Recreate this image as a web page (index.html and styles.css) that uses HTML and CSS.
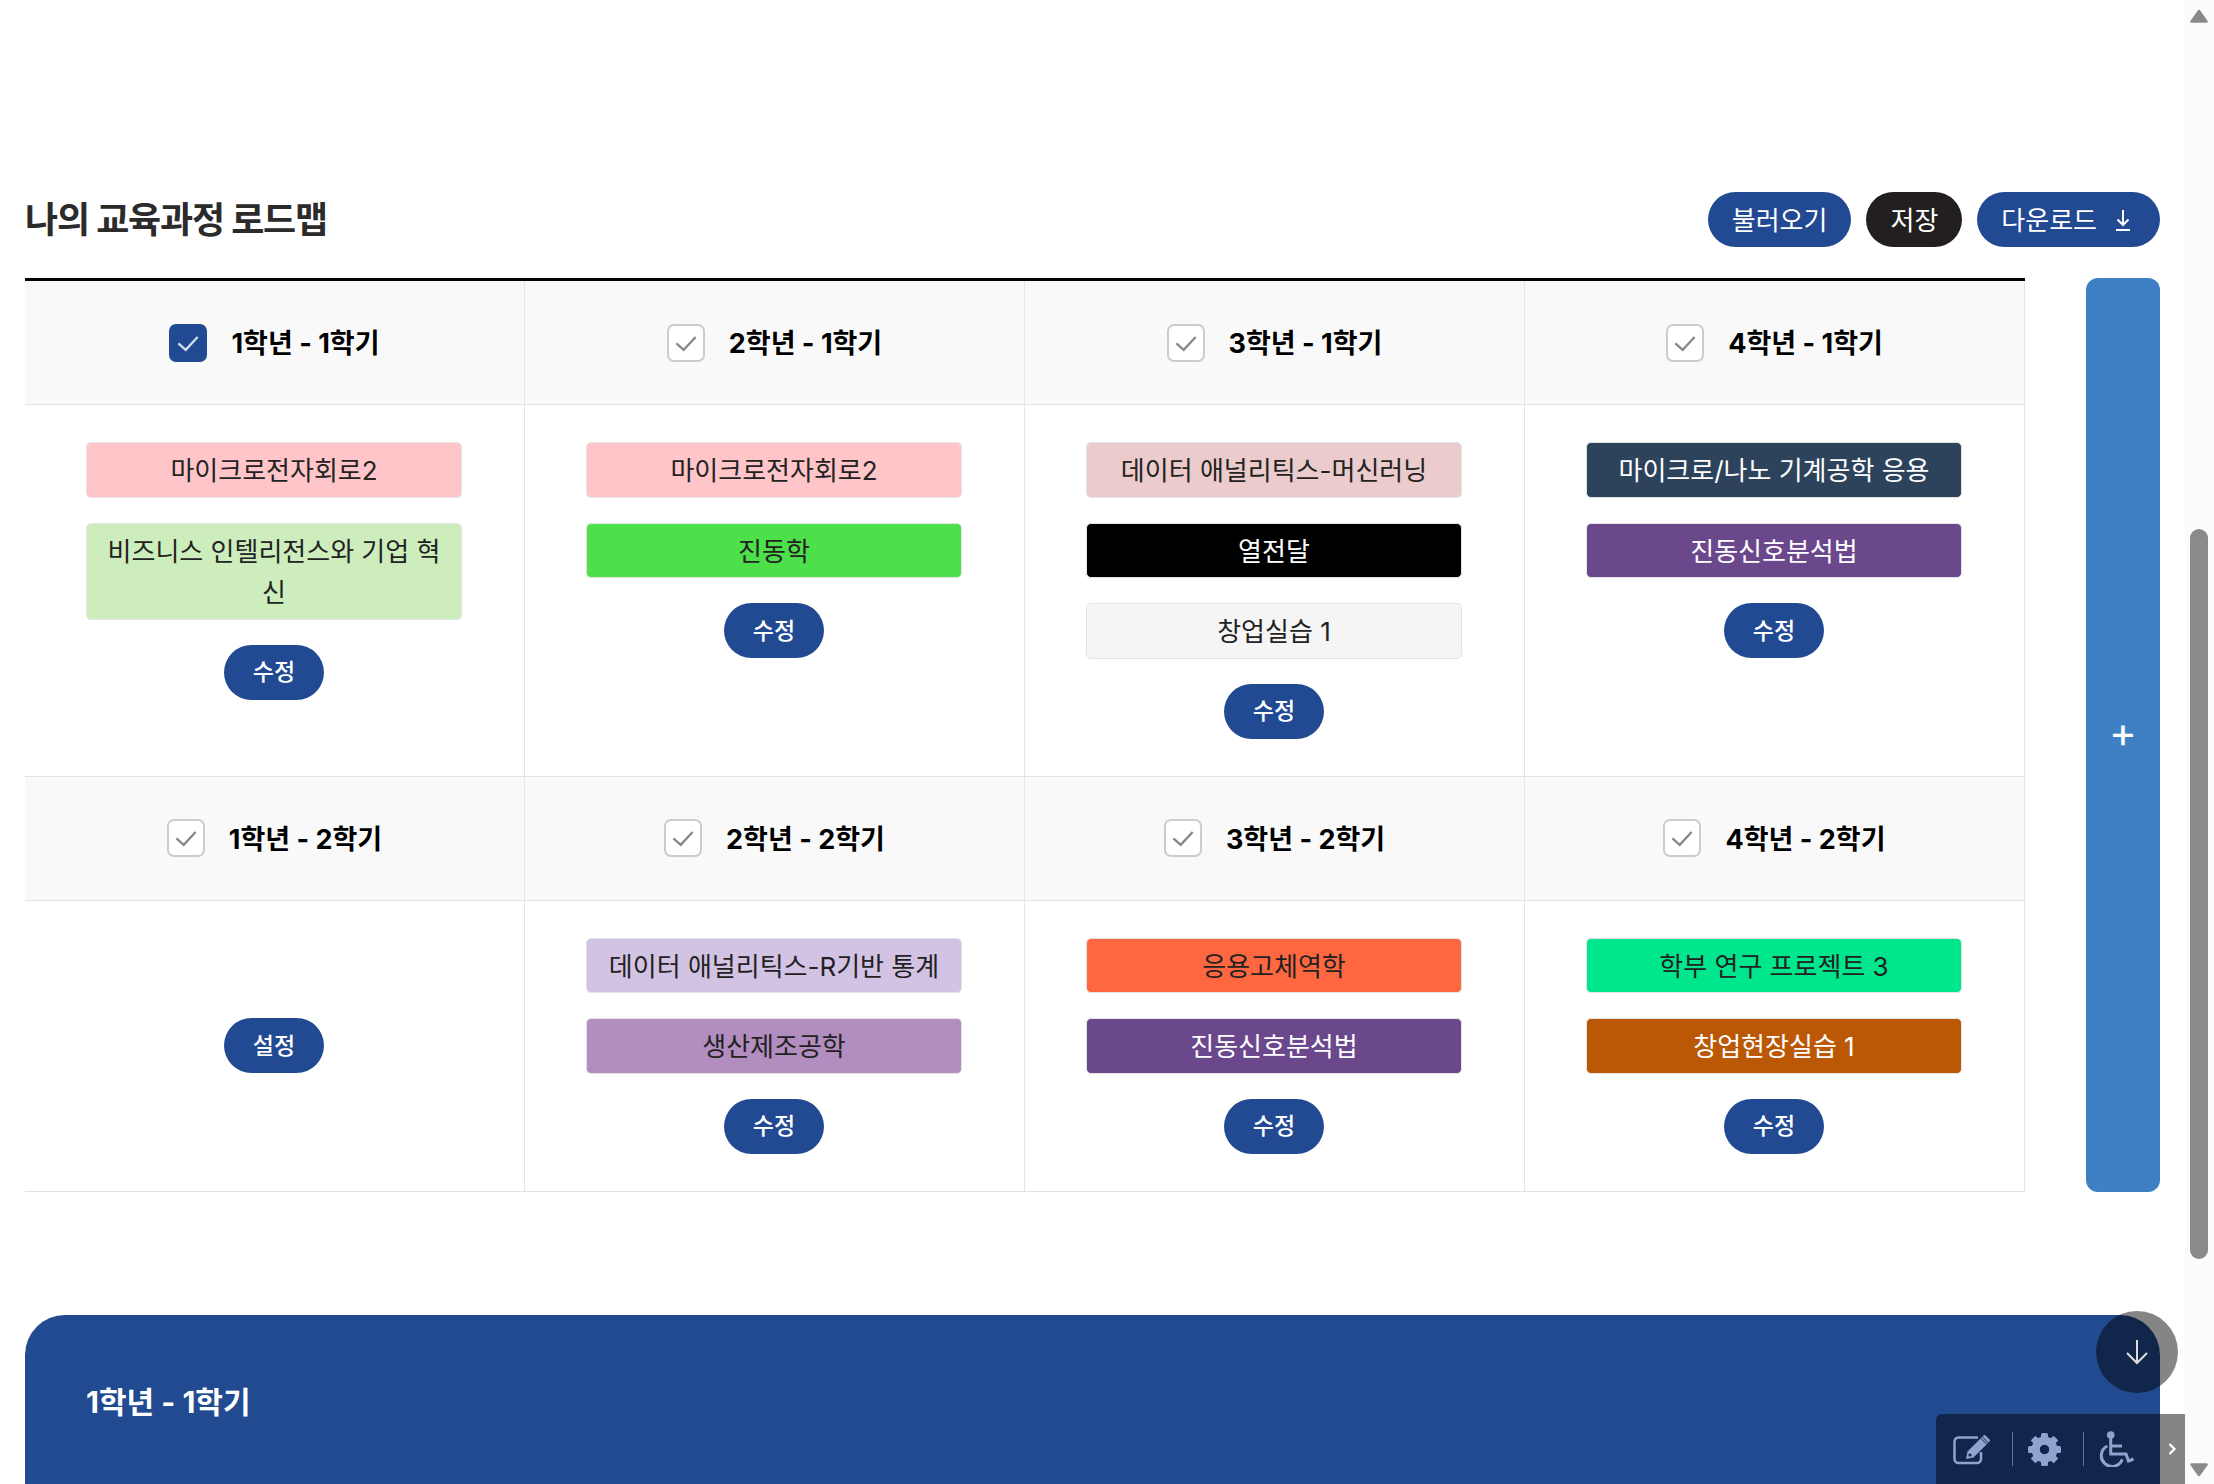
FILE: index.html
```html
<!DOCTYPE html>
<html lang="ko">
<head>
    <meta charset="UTF-8">
    <meta name="viewport" content="width=device-width, initial-scale=1.0">
    <title>나의 교육과정 로드맵</title>
    <link rel="stylesheet" href="styles.css">
</head>
<body>
    <div class="page">
        <div class="roadmap-head">
            <h2 class="roadmap-title">나의 교육과정 로드맵</h2>
            <div class="head-buttons">
                <button class="pill-button">불러오기</button>
                <button class="pill-button pill-dark">저장</button>
                <button class="pill-button pill-icon">다운로드
                    <svg class="download-icon" viewBox="0 0 16 22" fill="none" stroke="currentColor" stroke-width="2"><path d="M8 1v14M2.500 10.500 8 16l5.500-5.500M1 21h14"/></svg>
                </button>
            </div>
        </div>

        <div class="roadmap">
            <div class="semester-grid">
                <div class="semester-head">
                    <span class="check is-checked"><svg viewBox="0 0 37 37" fill="none" stroke="currentColor" stroke-width="2.500"><path d="M8 19l8 7 13-14"/></svg></span>
                    <span class="semester-name">1학년 - 1학기</span>
                </div>
                <div class="semester-head">
                    <span class="check"><svg viewBox="0 0 37 37" fill="none" stroke="currentColor" stroke-width="2.500"><path d="M8 19l8 7 13-14"/></svg></span>
                    <span class="semester-name">2학년 - 1학기</span>
                </div>
                <div class="semester-head">
                    <span class="check"><svg viewBox="0 0 37 37" fill="none" stroke="currentColor" stroke-width="2.500"><path d="M8 19l8 7 13-14"/></svg></span>
                    <span class="semester-name">3학년 - 1학기</span>
                </div>
                <div class="semester-head">
                    <span class="check"><svg viewBox="0 0 37 37" fill="none" stroke="currentColor" stroke-width="2.500"><path d="M8 19l8 7 13-14"/></svg></span>
                    <span class="semester-name">4학년 - 1학기</span>
                </div>

                <div class="semester-body">
                    <div class="course c-pink">마이크로전자회로2</div>
                    <div class="course c-mint">비즈니스 인텔리전스와 기업 혁신</div>
                    <button class="edit-button">수정</button>
                </div>
                <div class="semester-body">
                    <div class="course c-pink">마이크로전자회로2</div>
                    <div class="course c-green">진동학</div>
                    <button class="edit-button">수정</button>
                </div>
                <div class="semester-body">
                    <div class="course c-rose">데이터 애널리틱스-머신러닝</div>
                    <div class="course c-black">열전달</div>
                    <div class="course c-grey">창업실습 1</div>
                    <button class="edit-button">수정</button>
                </div>
                <div class="semester-body">
                    <div class="course c-navy">마이크로/나노 기계공학 응용</div>
                    <div class="course c-purple">진동신호분석법</div>
                    <button class="edit-button">수정</button>
                </div>

                <div class="semester-head">
                    <span class="check"><svg viewBox="0 0 37 37" fill="none" stroke="currentColor" stroke-width="2.500"><path d="M8 19l8 7 13-14"/></svg></span>
                    <span class="semester-name">1학년 - 2학기</span>
                </div>
                <div class="semester-head">
                    <span class="check"><svg viewBox="0 0 37 37" fill="none" stroke="currentColor" stroke-width="2.500"><path d="M8 19l8 7 13-14"/></svg></span>
                    <span class="semester-name">2학년 - 2학기</span>
                </div>
                <div class="semester-head">
                    <span class="check"><svg viewBox="0 0 37 37" fill="none" stroke="currentColor" stroke-width="2.500"><path d="M8 19l8 7 13-14"/></svg></span>
                    <span class="semester-name">3학년 - 2학기</span>
                </div>
                <div class="semester-head">
                    <span class="check"><svg viewBox="0 0 37 37" fill="none" stroke="currentColor" stroke-width="2.500"><path d="M8 19l8 7 13-14"/></svg></span>
                    <span class="semester-name">4학년 - 2학기</span>
                </div>

                <div class="semester-body is-empty">
                    <button class="edit-button">설정</button>
                </div>
                <div class="semester-body">
                    <div class="course c-lavender">데이터 애널리틱스-R기반 통계</div>
                    <div class="course c-orchid">생산제조공학</div>
                    <button class="edit-button">수정</button>
                </div>
                <div class="semester-body">
                    <div class="course c-coral">응용고체역학</div>
                    <div class="course c-purple">진동신호분석법</div>
                    <button class="edit-button">수정</button>
                </div>
                <div class="semester-body">
                    <div class="course c-spring">학부 연구 프로젝트 3</div>
                    <div class="course c-rust">창업현장실습 1</div>
                    <button class="edit-button">수정</button>
                </div>
            </div>
            <button class="add-panel">+</button>
        </div>

        <section class="detail">
            <h3 class="detail-title">1학년 - 1학기</h3>
        </section>
    </div>

    <!-- floating things over the page -->
    <button class="to-bottom">
        <svg viewBox="0 0 24 26" fill="none" stroke="currentColor" stroke-width="2"><path d="M12 1v23M2 14l10 10 10-10"/></svg>
    </button>
    <div class="toolbar">
        <svg class="tool-icon tool-edit" viewBox="0 0 39 31" fill="none" stroke="currentColor" stroke-width="2.500">
            <path d="M26 3.500H6.500a4 4 0 0 0-4 4V25a4 4 0 0 0 4 4H25a4 4 0 0 0 4-4v-7"/>
            <path d="M14 25l1.500-7.500L30 3l6 6-14.500 14.500z" fill="currentColor" stroke="none"/>
            <path d="M31.500 1.500a1.500 1.500 0 0 1 2 0l4 4a1.500 1.500 0 0 1 0 2l-1 1-6-6z" fill="currentColor" stroke="none"/>
            <path d="M29 4.500l5.500 5.500" stroke="#12254d" stroke-width="1"/>
            <circle cx="18" cy="21" r="1.600" fill="#12254d" stroke="none"/>
        </svg>
        <span class="tool-line"></span>
        <svg class="tool-icon tool-gear" viewBox="0 0 33 33" fill="currentColor">
            <circle cx="16.500" cy="16.500" r="9" fill="none" stroke="currentColor" stroke-width="8"/>
            <rect class="tooth" x="13" y="0" width="7" height="33" rx="1.500" mask="url(#gear-hole)"/>
            <rect x="13" y="0" width="7" height="33" rx="1.500" mask="url(#gear-hole)" transform="rotate(45 16.500 16.500)"/>
            <rect x="13" y="0" width="7" height="33" rx="1.500" mask="url(#gear-hole)" transform="rotate(90 16.500 16.500)"/>
            <rect x="13" y="0" width="7" height="33" rx="1.500" mask="url(#gear-hole)" transform="rotate(135 16.500 16.500)"/>
            <mask id="gear-hole" maskUnits="userSpaceOnUse" x="0" y="0" width="33" height="33">
                <rect width="33" height="33" fill="#fff"/>
                <circle cx="16.500" cy="16.500" r="5" fill="#000"/>
            </mask>
        </svg>
        <span class="tool-line tool-line-wide"></span>
        <svg class="tool-icon tool-access" viewBox="0 0 35 36" fill="none" stroke="currentColor" stroke-width="3">
            <circle cx="11.700" cy="4" r="3.800" fill="currentColor" stroke="none"/>
            <path d="M11.700 7v16H27l2.500 7 5-2"/>
            <path d="M11.700 15H23"/>
            <path d="M8.300 15a10.800 10.800 0 1 0 15 13.300"/>
        </svg>
        <span class="tool-arrow">
            <svg viewBox="0 0 8 12" fill="none" stroke="currentColor" stroke-width="2.200"><path d="M1.500 1l5 5-5 5"/></svg>
        </span>
    </div>

    <div class="scrollbar">
        <svg class="scroll-up" viewBox="0 0 18 14"><path d="M9 2 16.500 12.500H1.500z" fill="#8a8a8a" stroke="#8a8a8a" stroke-width="2.500" stroke-linejoin="round"/></svg>
        <span class="scroll-thumb"></span>
        <svg class="scroll-down" viewBox="0 0 18 14"><path d="M9 12 16.500 1.500H1.500z" fill="#8a8a8a" stroke="#8a8a8a" stroke-width="2.500" stroke-linejoin="round"/></svg>
    </div>
</body>
</html>
```

FILE: styles.css
```css
* {
    box-sizing: border-box;
}
html, body {
    height: 100%;
    overflow: hidden;
}
body {
    margin: 0;
    background-color: #fff;
    color: #222;
    font-family: Inter, "Noto Sans CJK KR", sans-serif;
}
button {
    font-family: inherit;
    border: none;
    cursor: pointer;
}
.page {
    width: 2185px;
    padding: 192px 25px 0;
}
.roadmap-head {
    display: flex;
    justify-content: space-between;
    align-items: center;
    height: 55px;
    margin-bottom: 31px;
}
.roadmap-title {
    margin: 0 0 5px;
    font-size: 36px;
    font-weight: 700;
    letter-spacing: -1.200px;
    color: #2b2b2b;
}
.head-buttons {
    display: flex;
    gap: 15px;
}
.pill-button {
    display: flex;
    align-items: center;
    gap: 18px;
    height: 55px;
    padding: 0 24px 3px;
    border-radius: 28px;
    background-color: #224a92;
    color: #fff;
    font-size: 26px;
}
.pill-dark {
    background-color: #231f20;
}
.pill-icon {
    padding-right: 29px;
}
.download-icon {
    width: 16px;
    height: 22px;
    margin-top: 3px;
}
.roadmap {
    display: flex;
    justify-content: space-between;
}
.semester-grid {
    display: grid;
    grid-template-columns: repeat(4, 500px);
    width: 2000px;
    border-top: 3px solid #000;
}
.semester-head {
    display: flex;
    align-items: center;
    justify-content: center;
    gap: 24px;
    height: 124px;
    background-color: #f9f9f9;
    border-right: 1px solid #e6e6e6;
    border-bottom: 1px solid #e2e2e2;
}
.check {
    width: 38px;
    height: 38px;
    border: 2px solid #ccc;
    border-radius: 7px;
    background-color: #fff;
    color: #888;
}
.check svg {
    display: block;
    width: 100%;
    height: 100%;
}
.check.is-checked {
    border-color: #224a92;
    background-color: #224a92;
    color: #d5dded;
}
.semester-name {
    margin-bottom: 2px;
    font-size: 27px;
    font-weight: 700;
    color: #000;
}
.semester-body {
    display: flex;
    flex-direction: column;
    align-items: center;
    gap: 25px;
    padding: 37px 62px 37px 61px;
    border-right: 1px solid #e6e6e6;
    border-bottom: 1px solid #e2e2e2;
}
.semester-body.is-empty {
    justify-content: center;
}
.course {
    width: 376px;
    padding: 7px 15px 5px;
    border: 1px solid #e4e4e4;
    border-radius: 5px;
    font-size: 26px;
    line-height: 41.500px;
    text-align: center;
}
.c-pink { background-color: #ffc5c8; }
.c-mint { background-color: #cdeebc; }
.c-green { background-color: #4de04b; }
.c-rose { background-color: #ebcbcb; }
.c-black { background-color: #000; color: #fff; }
.c-grey { background-color: #f5f5f5; }
.c-navy { background-color: #2d435c; color: #fff; }
.c-purple { background-color: #6b488c; color: #fff; }
.c-lavender { background-color: #d2c2e4; }
.c-orchid { background-color: #b28dbf; }
.c-coral { background-color: #ff6740; }
.c-spring { background-color: #00e68c; }
.c-rust { background-color: #bb5806; color: #fff; }
.edit-button {
    width: 100px;
    height: 55px;
    padding: 0 0 4px;
    border-radius: 28px;
    background-color: #224a92;
    color: #fff;
    font-size: 23px;
    font-weight: 500;
}
.add-panel {
    width: 74px;
    padding: 0 0 6px;
    border-radius: 12px;
    background-color: #3e80c3;
    color: #fff;
    font-size: 42px;
    font-weight: 400;
}
.detail {
    height: 300px;
    margin-top: 123px;
    padding: 63px 61px;
    border-radius: 40px 40px 0 0;
    background-color: #214a91;
}
.detail-title {
    margin: 0;
    font-size: 30px;
    font-weight: 700;
    color: #fff;
}
.to-bottom {
    position: fixed;
    left: 2096px;
    top: 1311px;
    display: flex;
    align-items: center;
    justify-content: center;
    width: 82px;
    height: 82px;
    padding: 0;
    border-radius: 50%;
    background-color: rgba(0, 0, 0, 0.48);
    color: #ddd;
}
.to-bottom svg {
    width: 24px;
    height: 26px;
}
.toolbar {
    position: fixed;
    left: 1936px;
    top: 1414px;
    display: flex;
    align-items: center;
    width: 249px;
    height: 70px;
    padding-left: 16px;
    border-top-left-radius: 6px;
    background-color: rgba(0, 0, 0, 0.48);
    color: #8fa3cf;
}
.tool-icon {
    flex-shrink: 0;
}
.tool-edit {
    width: 39px;
    height: 31px;
}
.tool-gear {
    width: 33px;
    height: 33px;
    margin-left: 15px;
}
.tool-access {
    width: 35px;
    height: 36px;
    margin-left: 15px;
}
.tool-line {
    flex-shrink: 0;
    width: 1px;
    height: 34px;
    margin-left: 21px;
    background-color: #5f74a6;
}
.tool-line-wide {
    margin-left: 22px;
}
.tool-arrow {
    display: flex;
    margin-left: 34px;
    color: #fff;
}
.tool-arrow svg {
    width: 8px;
    height: 12px;
}
.scrollbar {
    position: fixed;
    top: 0;
    right: 0;
    width: 29px;
    height: 1484px;
    background-color: #fbfbfb;
}
.scroll-thumb {
    position: absolute;
    left: 5px;
    top: 529px;
    width: 18px;
    height: 730px;
    border-radius: 9px;
    background-color: #8a8a8a;
}
.scroll-up, .scroll-down {
    position: absolute;
    left: 5px;
    width: 18px;
    height: 14px;
}
.scroll-up {
    top: 9px;
}
.scroll-down {
    top: 1463px;
}
```
